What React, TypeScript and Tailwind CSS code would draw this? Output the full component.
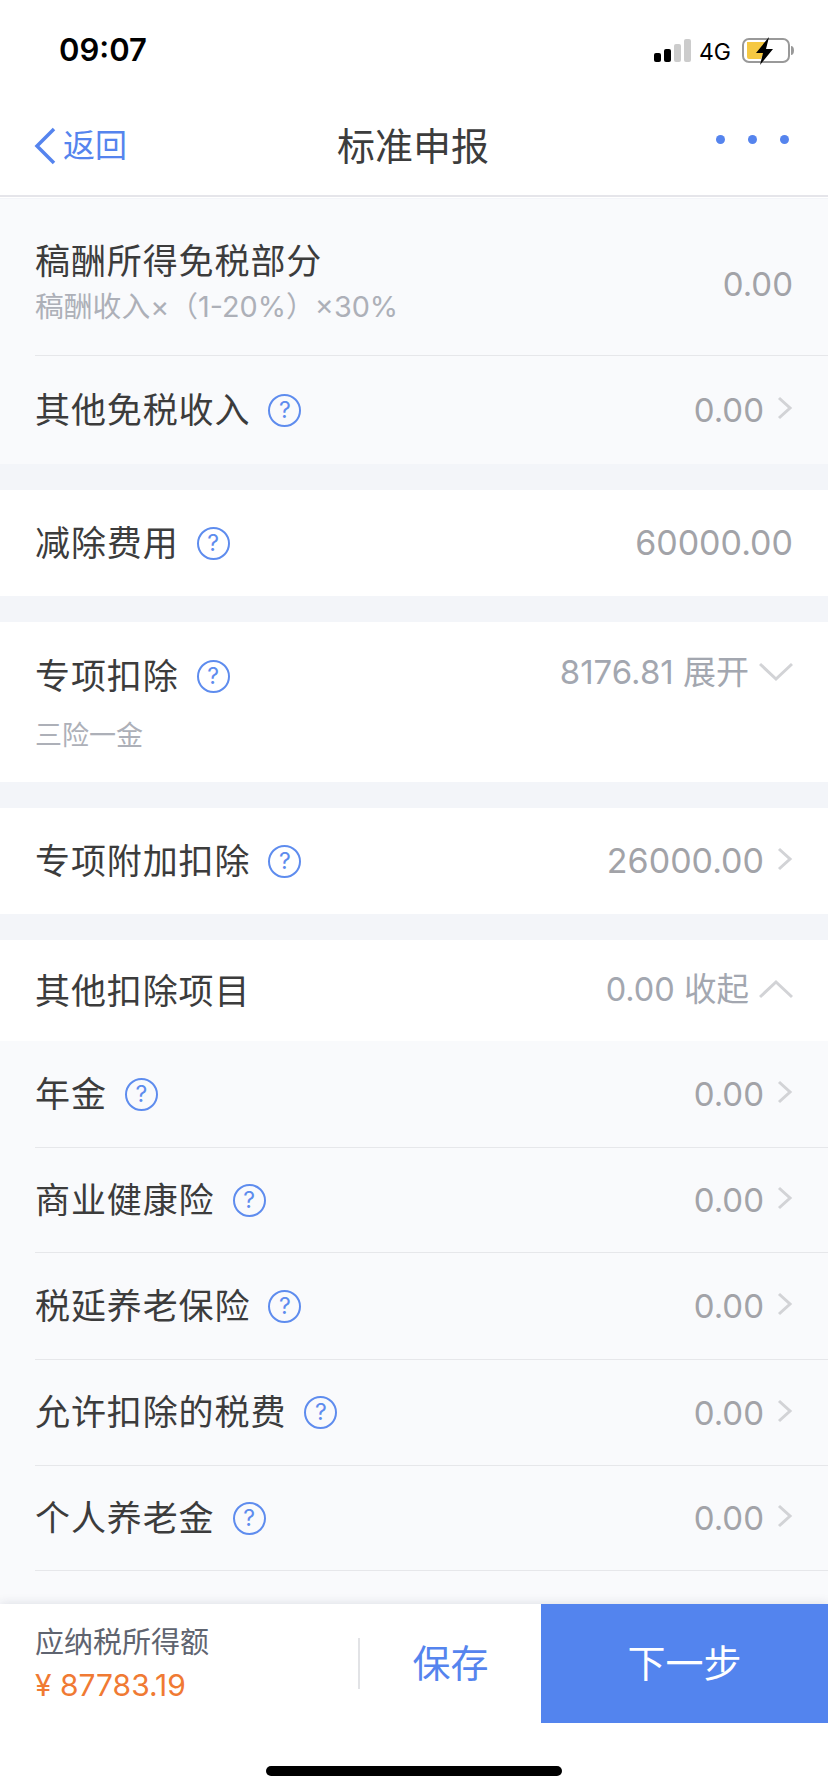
const CJK = "font-['Inter','Noto_Sans_CJK_SC',sans-serif]";

function Help() {
  return (
    <span className="ml-[18px] flex h-[33px] w-[33px] items-center justify-center rounded-full border-2 border-[#5e8cee] text-[23px] leading-none text-[#5e8cee]">
      ?
    </span>
  );
}

function Arrow() {
  return (
    <svg className="ml-[13px] -translate-y-[2px]" width="16" height="24" viewBox="0 0 16 24" fill="none">
      <path d="M2 2l11 10L2 22" stroke="#d2d3d6" strokeWidth="3" />
    </svg>
  );
}

function Row({
  label,
  value,
  help = true,
  arrow = true,
  height = 'h-[106px]',
  divider = false,
}: {
  label: string;
  value: string;
  help?: boolean;
  arrow?: boolean;
  height?: string;
  divider?: boolean;
}) {
  return (
    <div className={`ml-[35px] flex items-center pr-[35px] ${height} ${divider ? 'border-b border-[#e6e7ea]' : ''}`}>
      <span className="text-[35px] tracking-[0.9px] text-[#3c3c3c]">{label}</span>
      {help && <Help />}
      <span className={`ml-auto text-[#a2a3a8] ${value === '0.00' ? 'translate-y-[1px] text-[33px]' : '-translate-y-[1px] text-[34px]'}`}>{value}</span>
      {arrow && <Arrow />}
    </div>
  );
}

function Gap() {
  return <div className="h-[26px] bg-[#f3f5f9]" />;
}

function StatusBar() {
  return (
    <div className="flex h-[90px] items-start justify-between pl-[59px] pr-[33px] pt-[28px]">
      <span className="text-[31px] font-semibold leading-[44px] text-black">09:07</span>
      <svg className="mt-[9px]" width="142" height="28" viewBox="0 0 142 28" fill="none">
        <rect x="1" y="16" width="7" height="9" rx="2" fill="#000" />
        <rect x="11" y="12" width="7" height="13" rx="2" fill="#000" />
        <rect x="21" y="7" width="7" height="18" rx="2" fill="#ccc" />
        <rect x="31" y="2" width="7" height="23" rx="2" fill="#ccc" />
        <text x="46" y="23" fontFamily="Inter" fontSize="23" fill="#000">4G</text>
        <rect x="90" y="2" width="46" height="23" rx="6" stroke="#999" strokeWidth="2" />
        <path d="M94 5h19l-7 10h5l-3 7H96a2 2 0 0 1-2-2z" fill="#f5c842" />
        <path d="M116 0l-13 16h7l-3 12 13-16h-7z" fill="#000" />
        <path d="M138 9c2 0 3 2 3 4.500s-1 4.500-3 4.500z" fill="#999" />
      </svg>
    </div>
  );
}

function NavBar() {
  return (
    <div className="relative flex h-[107px] items-center justify-between border-b-2 border-[#e5e5ea] pb-[6px] pl-[34px] pr-[39px]">
      <div className="flex translate-y-[6px] items-center">
        <svg width="22" height="38" viewBox="0 0 22 38" fill="none">
          <path d="M20 2L3 19l17 17" stroke="#5584ee" strokeWidth="3.500" />
        </svg>
        <span className="ml-[7px] text-[32px] text-[#5584ee]">返回</span>
      </div>
      <span className="absolute left-[337px] top-[30px] text-[38px] leading-[52px] text-[#3c3c3c]">标准申报</span>
      <div className="flex gap-[23px]">
        <span className="h-[9px] w-[9px] rounded-full bg-[#5584ee]" />
        <span className="h-[9px] w-[9px] rounded-full bg-[#5584ee]" />
        <span className="h-[9px] w-[9px] rounded-full bg-[#5584ee]" />
      </div>
    </div>
  );
}

function BottomBar() {
  return (
    <div className="flex h-[119px] bg-white shadow-[0_0_10px_rgba(40,50,80,0.15)]">
      <div className="flex w-[358px] flex-col pl-[35px] pt-[19px]">
        <span className="text-[29px] leading-[40px] text-[#5f6470]">应纳税所得额</span>
        <span className="mt-[2px] text-[30px] leading-[40px] text-[#f07a33]">¥ 87783.19</span>
      </div>
      <div className="mt-[34px] h-[51px] w-[2px] bg-[#e2e3e6]" />
      <div className="flex w-[181px] items-center justify-center text-[38px] text-[#5584ee]">保存</div>
      <div className="flex flex-1 items-center justify-center bg-[#5384ee] text-[38px] text-white">下一步</div>
    </div>
  );
}

export default function App() {
  return (
    <div className={`flex h-[1792px] w-[828px] flex-col overflow-hidden bg-white ${CJK}`}>
      <StatusBar />
      <NavBar />
      <div className="mt-[1px] h-[1px] bg-[#f3f5f9]" />
      <div className="flex-1 overflow-hidden">
        <div className="bg-[#f9fafc]">
          <div className="ml-[35px] flex h-[157px] items-center justify-between border-b border-[#e6e7ea] pr-[35px]">
            <div className="flex flex-col pt-[8px]">
              <span className="text-[35px] leading-[46px] tracking-[0.9px] text-[#3c3c3c]">稿酬所得免税部分</span>
              <span className="mt-[5px] text-[28.800px] leading-[36px] text-[#adb0b8]">稿酬收入×（1-20%）×30%</span>
            </div>
            <span className="translate-y-[8px] text-[33px] text-[#a2a3a8]">0.00</span>
          </div>
          <Row label="其他免税收入" value="0.00" height="h-[108px]" />
        </div>
        <Gap />
        <Row label="减除费用" value="60000.00" arrow={false} />
        <Gap />
        <div className="h-[160px] pl-[35px] pr-[35px] pt-[25px]">
          <div className="flex h-[58px] items-center">
            <span className="text-[35px] tracking-[0.9px] text-[#3c3c3c]">专项扣除</span>
            <Help />
            <span className="ml-auto -translate-y-[3px] text-[33px] text-[#a3a7b0]">8176.81 展开</span>
            <svg className="ml-[10px] -translate-y-[4px]" width="34" height="20" viewBox="0 0 34 20" fill="none">
              <path d="M1 2l16 15L33 2" stroke="#d2d3d6" strokeWidth="3" />
            </svg>
          </div>
          <div className="mt-[13px] text-[27px] leading-[36px] text-[#adb0b8]">三险一金</div>
        </div>
        <Gap />
        <Row label="专项附加扣除" value="26000.00" />
        <Gap />
        <div className="flex h-[101px] items-center pl-[35px] pr-[35px]">
          <span className="translate-y-[1px] text-[35px] tracking-[0.9px] text-[#3c3c3c]">其他扣除项目</span>
          <span className="ml-auto text-[32.500px] text-[#a3a7b0]">0.00 收起</span>
          <svg className="ml-[10px] -translate-y-[2px]" width="34" height="20" viewBox="0 0 34 20" fill="none">
            <path d="M1 18L17 3l16 15" stroke="#d2d3d6" strokeWidth="3" />
          </svg>
        </div>
        <div className="h-full bg-[#f9fafc]">
          <Row label="年金" value="0.00" height="h-[107px]" divider />
          <Row label="商业健康险" value="0.00" height="h-[105px]" divider />
          <Row label="税延养老保险" value="0.00" height="h-[107px]" divider />
          <Row label="允许扣除的税费" value="0.00" height="h-[106px]" divider />
          <Row label="个人养老金" value="0.00" height="h-[105px]" divider />
        </div>
      </div>
      <BottomBar />
      <div className="flex h-[69px] items-start justify-center bg-white pt-[43px]">
        <div className="h-[10px] w-[296px] rounded-full bg-black" />
      </div>
    </div>
  );
}
